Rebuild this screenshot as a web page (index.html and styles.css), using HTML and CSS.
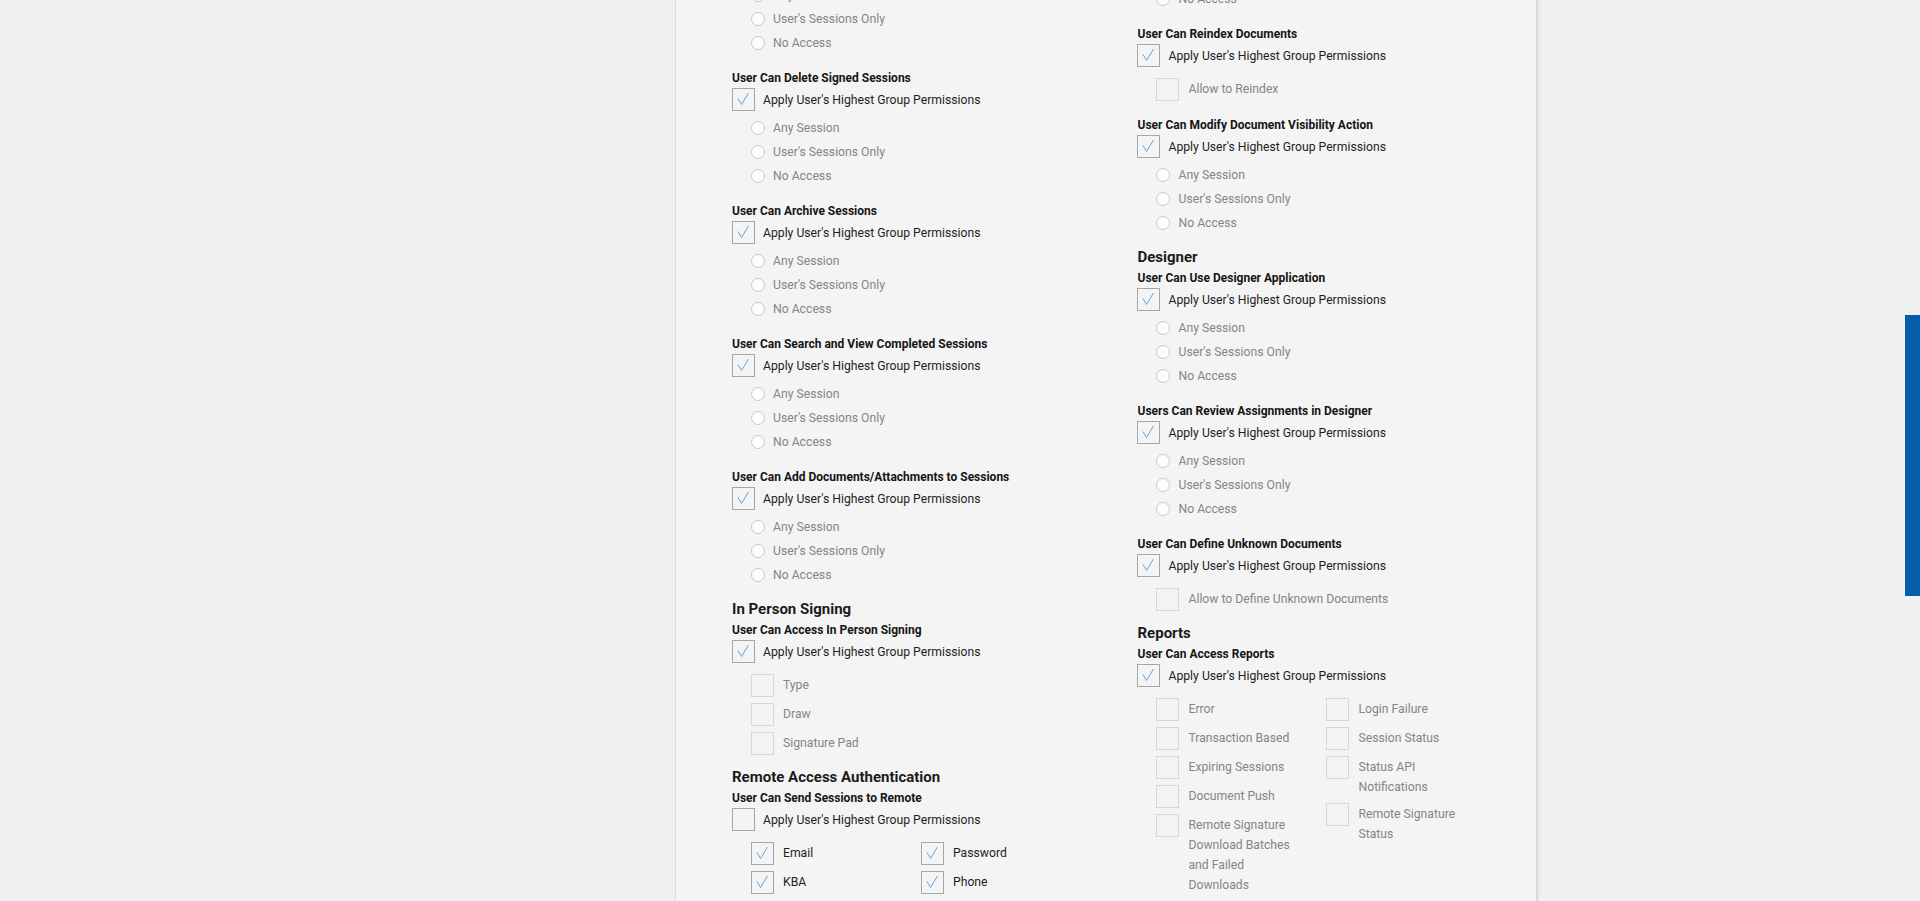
FILE: index.html
```html
<!DOCTYPE html>
<html lang="en">
<head>
    <meta charset="UTF-8">
    <meta name="viewport" content="width=device-width, initial-scale=1.0">
    <title>User Permissions</title>
    <link rel="stylesheet" href="styles.css">
</head>
<body>
    <div class="panel">
        <div class="columns">
            <!-- Left column -->
            <div class="column column-left">
                <div class="perm">
                    <div class="radio-list">
                        <div class="radio-row"><span class="radio"></span>Any Session</div>
                        <div class="radio-row"><span class="radio"></span>User's Sessions Only</div>
                        <div class="radio-row"><span class="radio"></span>No Access</div>
                    </div>
                </div>

                <div class="perm">
                    <div class="perm-title">User Can Delete Signed Sessions</div>
                    <div class="apply"><span class="box checked"><svg viewBox="0 0 23 23"><polyline points="6.5,11.5 10.5,18 18,5.5"/></svg></span>Apply User's Highest Group Permissions</div>
                    <div class="radio-list">
                        <div class="radio-row"><span class="radio"></span>Any Session</div>
                        <div class="radio-row"><span class="radio"></span>User's Sessions Only</div>
                        <div class="radio-row"><span class="radio"></span>No Access</div>
                    </div>
                </div>

                <div class="perm">
                    <div class="perm-title">User Can Archive Sessions</div>
                    <div class="apply"><span class="box checked"><svg viewBox="0 0 23 23"><polyline points="6.5,11.5 10.5,18 18,5.5"/></svg></span>Apply User's Highest Group Permissions</div>
                    <div class="radio-list">
                        <div class="radio-row"><span class="radio"></span>Any Session</div>
                        <div class="radio-row"><span class="radio"></span>User's Sessions Only</div>
                        <div class="radio-row"><span class="radio"></span>No Access</div>
                    </div>
                </div>

                <div class="perm">
                    <div class="perm-title">User Can Search and View Completed Sessions</div>
                    <div class="apply"><span class="box checked"><svg viewBox="0 0 23 23"><polyline points="6.5,11.5 10.5,18 18,5.5"/></svg></span>Apply User's Highest Group Permissions</div>
                    <div class="radio-list">
                        <div class="radio-row"><span class="radio"></span>Any Session</div>
                        <div class="radio-row"><span class="radio"></span>User's Sessions Only</div>
                        <div class="radio-row"><span class="radio"></span>No Access</div>
                    </div>
                </div>

                <div class="perm">
                    <div class="perm-title">User Can Add Documents/Attachments to Sessions</div>
                    <div class="apply"><span class="box checked"><svg viewBox="0 0 23 23"><polyline points="6.5,11.5 10.5,18 18,5.5"/></svg></span>Apply User's Highest Group Permissions</div>
                    <div class="radio-list">
                        <div class="radio-row"><span class="radio"></span>Any Session</div>
                        <div class="radio-row"><span class="radio"></span>User's Sessions Only</div>
                        <div class="radio-row"><span class="radio"></span>No Access</div>
                    </div>
                </div>

                <h2 class="section-title">In Person Signing</h2>
                <div class="perm">
                    <div class="perm-title">User Can Access In Person Signing</div>
                    <div class="apply"><span class="box checked"><svg viewBox="0 0 23 23"><polyline points="6.5,11.5 10.5,18 18,5.5"/></svg></span>Apply User's Highest Group Permissions</div>
                    <div class="check-list">
                        <div class="check-col">
                            <div class="check-item"><span class="box disabled"></span><span class="check-label">Type</span></div>
                            <div class="check-item"><span class="box disabled"></span><span class="check-label">Draw</span></div>
                            <div class="check-item"><span class="box disabled"></span><span class="check-label">Signature Pad</span></div>
                        </div>
                    </div>
                </div>

                <h2 class="section-title">Remote Access Authentication</h2>
                <div class="perm">
                    <div class="perm-title">User Can Send Sessions to Remote</div>
                    <div class="apply"><span class="box"></span>Apply User's Highest Group Permissions</div>
                    <div class="check-list">
                        <div class="check-col">
                            <div class="check-item enabled"><span class="box checked"><svg viewBox="0 0 23 23"><polyline points="6.5,11.5 10.5,18 18,5.5"/></svg></span><span class="check-label">Email</span></div>
                            <div class="check-item enabled"><span class="box checked"><svg viewBox="0 0 23 23"><polyline points="6.5,11.5 10.5,18 18,5.5"/></svg></span><span class="check-label">KBA</span></div>
                        </div>
                        <div class="check-col">
                            <div class="check-item enabled"><span class="box checked"><svg viewBox="0 0 23 23"><polyline points="6.5,11.5 10.5,18 18,5.5"/></svg></span><span class="check-label">Password</span></div>
                            <div class="check-item enabled"><span class="box checked"><svg viewBox="0 0 23 23"><polyline points="6.5,11.5 10.5,18 18,5.5"/></svg></span><span class="check-label">Phone</span></div>
                        </div>
                    </div>
                </div>
            </div>

            <!-- Right column -->
            <div class="column column-right">
                <div class="perm">
                    <div class="radio-list">
                        <div class="radio-row"><span class="radio"></span>User's Sessions Only</div>
                        <div class="radio-row"><span class="radio"></span>No Access</div>
                    </div>
                </div>

                <div class="perm">
                    <div class="perm-title">User Can Reindex Documents</div>
                    <div class="apply"><span class="box checked"><svg viewBox="0 0 23 23"><polyline points="6.5,11.5 10.5,18 18,5.5"/></svg></span>Apply User's Highest Group Permissions</div>
                    <div class="check-list">
                        <div class="check-col wide">
                            <div class="check-item"><span class="box disabled"></span><span class="check-label">Allow to Reindex</span></div>
                        </div>
                    </div>
                </div>

                <div class="perm">
                    <div class="perm-title">User Can Modify Document Visibility Action</div>
                    <div class="apply"><span class="box checked"><svg viewBox="0 0 23 23"><polyline points="6.5,11.5 10.5,18 18,5.5"/></svg></span>Apply User's Highest Group Permissions</div>
                    <div class="radio-list">
                        <div class="radio-row"><span class="radio"></span>Any Session</div>
                        <div class="radio-row"><span class="radio"></span>User's Sessions Only</div>
                        <div class="radio-row"><span class="radio"></span>No Access</div>
                    </div>
                </div>

                <h2 class="section-title">Designer</h2>
                <div class="perm">
                    <div class="perm-title">User Can Use Designer Application</div>
                    <div class="apply"><span class="box checked"><svg viewBox="0 0 23 23"><polyline points="6.5,11.5 10.5,18 18,5.5"/></svg></span>Apply User's Highest Group Permissions</div>
                    <div class="radio-list">
                        <div class="radio-row"><span class="radio"></span>Any Session</div>
                        <div class="radio-row"><span class="radio"></span>User's Sessions Only</div>
                        <div class="radio-row"><span class="radio"></span>No Access</div>
                    </div>
                </div>

                <div class="perm">
                    <div class="perm-title">Users Can Review Assignments in Designer</div>
                    <div class="apply"><span class="box checked"><svg viewBox="0 0 23 23"><polyline points="6.5,11.5 10.5,18 18,5.5"/></svg></span>Apply User's Highest Group Permissions</div>
                    <div class="radio-list">
                        <div class="radio-row"><span class="radio"></span>Any Session</div>
                        <div class="radio-row"><span class="radio"></span>User's Sessions Only</div>
                        <div class="radio-row"><span class="radio"></span>No Access</div>
                    </div>
                </div>

                <div class="perm">
                    <div class="perm-title">User Can Define Unknown Documents</div>
                    <div class="apply"><span class="box checked"><svg viewBox="0 0 23 23"><polyline points="6.5,11.5 10.5,18 18,5.5"/></svg></span>Apply User's Highest Group Permissions</div>
                    <div class="check-list">
                        <div class="check-col wide">
                            <div class="check-item"><span class="box disabled"></span><span class="check-label">Allow to Define Unknown Documents</span></div>
                        </div>
                    </div>
                </div>

                <h2 class="section-title">Reports</h2>
                <div class="perm">
                    <div class="perm-title">User Can Access Reports</div>
                    <div class="apply"><span class="box checked"><svg viewBox="0 0 23 23"><polyline points="6.5,11.5 10.5,18 18,5.5"/></svg></span>Apply User's Highest Group Permissions</div>
                    <div class="check-list">
                        <div class="check-col">
                            <div class="check-item"><span class="box disabled"></span><span class="check-label">Error</span></div>
                            <div class="check-item"><span class="box disabled"></span><span class="check-label">Transaction Based</span></div>
                            <div class="check-item"><span class="box disabled"></span><span class="check-label">Expiring Sessions</span></div>
                            <div class="check-item"><span class="box disabled"></span><span class="check-label">Document Push</span></div>
                            <div class="check-item"><span class="box disabled"></span><span class="check-label">Remote Signature Download Batches and Failed Downloads</span></div>
                        </div>
                        <div class="check-col">
                            <div class="check-item"><span class="box disabled"></span><span class="check-label">Login Failure</span></div>
                            <div class="check-item"><span class="box disabled"></span><span class="check-label">Session Status</span></div>
                            <div class="check-item"><span class="box disabled"></span><span class="check-label">Status API Notifications</span></div>
                            <div class="check-item"><span class="box disabled"></span><span class="check-label">Remote Signature Status</span></div>
                        </div>
                    </div>
                </div>
            </div>
        </div>
    </div>

    <div class="side-tab"></div>
</body>
</html>
```

FILE: styles.css
```css
/* Reset */
* {
    margin: 0;
    padding: 0;
    box-sizing: border-box;
}

html, body {
    height: 100%;
    overflow: hidden;
}

body {
    font-family: Roboto, 'Liberation Sans', Arial, sans-serif;
    background: #f0f0f0;
    color: #1c1c1c;
}

.panel {
    width: 862px;
    min-height: 1000px;
    margin: -42px 0 0 675px;
    padding: 0 0 0 56px;
    background: #f4f4f4;
    border-left: 1px solid #dedede;
    border-right: 1px solid #d4d4d4;
    box-shadow: 2px 0 3px rgba(0, 0, 0, 0.06);
}

.columns {
    display: flex;
}

.column-left {
    width: 407px;
    padding-top: 20px;
}

.column-right {
    width: 400px;
}

/* Section headings */
.section-title {
    font-size: 15px;
    font-weight: 700;
    line-height: 20px;
    margin: -4px 0 3px;
    color: #1b1b1b;
}

/* Permission groups */
.perm {
    margin-bottom: 16px;
}

.perm-title {
    font-size: 12px;
    font-weight: 700;
    line-height: 16px;
    color: #151515;
}

.apply {
    display: flex;
    align-items: center;
    gap: 8px;
    margin-top: 2px;
    height: 23px;
    font-size: 12.2px;
    color: #1e1e1e;
}

/* Checkboxes */
.box {
    flex: none;
    width: 23px;
    height: 23px;
    border: 1px solid #a6a6a6;
    background: #f4f4f4;
    display: block;
}

.box svg {
    display: block;
    width: 21px;
    height: 21px;
    margin: -1px 0 0 -1px;
    overflow: visible;
}

.box polyline {
    fill: none;
    stroke: #5a9ad4;
    stroke-width: 1;
}

.box.disabled {
    border-color: #d6d6d6;
}

/* Radio buttons */
.radio-list {
    margin: 5px 0 -1px;
    padding-left: 19px;
}

.radio-row {
    display: flex;
    align-items: center;
    height: 24px;
    gap: 8px;
    font-size: 12.2px;
    color: #858585;
}

.radio {
    width: 14px;
    height: 14px;
    border: 1px solid #c9c9c9;
    border-radius: 50%;
    background: #fdfdfd;
}

/* Sub checkbox lists */
.check-list {
    display: flex;
    gap: 20px;
    margin-top: 11px;
    padding-left: 19px;
}

.check-col {
    width: 150px;
}

.check-col.wide {
    width: 300px;
}

.check-item {
    display: flex;
    gap: 9px;
    margin-bottom: 6px;
    font-size: 12.2px;
    color: #858585;
}

.check-item:last-child {
    margin-bottom: 0;
}

.check-label {
    padding-top: 1px;
    line-height: 20px;
}

.check-item.enabled {
    color: #1e1e1e;
}

.check-item.enabled .box {
    border-color: #a6a6a6;
}

/* Blue tab on the right edge */
.side-tab {
    position: fixed;
    right: 0;
    top: 315px;
    width: 15px;
    height: 281px;
    background: #045ea8;
}
```
